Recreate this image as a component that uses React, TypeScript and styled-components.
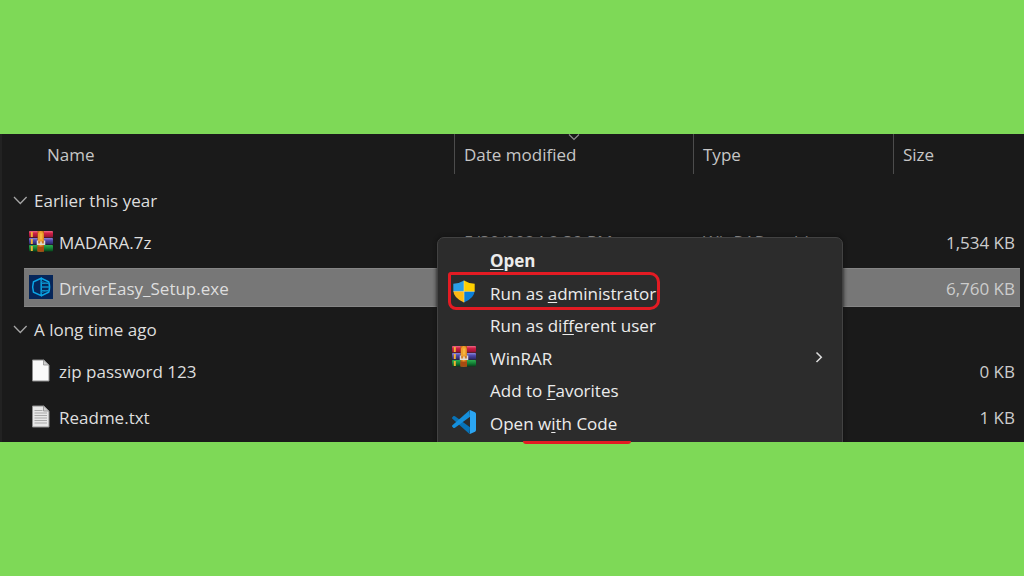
import React from "react";
import styled, { createGlobalStyle } from "styled-components";

const GlobalStyle = createGlobalStyle`
  * { box-sizing: border-box; }
  body {
    margin: 0;
    background: #7ed957;
    font-family: "Open Sans", "Noto Sans", sans-serif;
    font-size: 17px;
    line-height: 24px;
  }
  button {
    font: inherit;
    color: inherit;
    background: none;
    border: 0;
    padding: 0;
    text-align: left;
  }
`;

const Page = styled.main`
  min-height: 100vh;
  display: flex;
  flex-direction: column;
  justify-content: center;
`;

const Stage = styled.div`
  position: relative;
`;

const Explorer = styled.section`
  position: relative;
  overflow: hidden;
  padding-bottom: 2px;
  background: #1a1a1a;
  box-shadow: inset 2px 0 #222222;
`;

const FileTable = styled.table`
  width: 100%;
  table-layout: fixed;
  border-collapse: separate;
  border-spacing: 0;
  color: #dedede;
`;

const Column = styled.col<{ $width?: number }>`
  width: ${(p) => (p.$width ? `${p.$width}px` : "auto")};
`;

const HeadCell = styled.th<{ $first?: boolean }>`
  position: relative;
  height: 40px;
  padding: 2px 0 0 ${(p) => (p.$first ? "47px" : "9px")};
  border-left: ${(p) => (p.$first ? "0" : "1px solid #4c4c4c")};
  color: #c6c6c6;
  font-weight: 400;
  text-align: left;
`;

const SortMark = styled.svg`
  position: absolute;
  top: 0;
  left: 50%;
  width: 12px;
  height: 7px;
  margin-left: -6px;
`;

const Group = styled.tbody`
  &:first-of-type::before {
    content: "";
    display: table-row;
    height: 8px;
  }
`;

const GroupCell = styled.th`
  height: 37px;
  padding: 0 0 0 13px;
  font-weight: 400;
  text-align: left;
`;

const GroupToggle = styled.button`
  display: flex;
  align-items: center;
  gap: 6px;
`;

const Cell = styled.td<{ $selected?: boolean }>`
  height: 46px;
  padding: 0 5px 0 10px;
  border: 0 solid transparent;
  border-width: 3px 0 4px;
  background: ${(p) => (p.$selected ? "#777777" : "none")} padding-box;
  box-shadow: ${(p) => (p.$selected ? "inset 0 1px #868686, inset 0 -1px #868686" : "none")};
  color: #cccccc;
  white-space: nowrap;
`;

const NameCell = styled(Cell)`
  padding: 2px 0 0 5px;
  border-left-width: 24px;
  color: #dedede;
`;

const SizeCell = styled(Cell)`
  padding-top: 2px;
  border-right-width: 4px;
  text-align: right;
`;

const FileLabel = styled.span`
  display: flex;
  align-items: center;
  gap: 6px;
  svg { margin-bottom: 3px; }
`;

const Menu = styled.menu`
  position: absolute;
  top: 103px;
  left: 437px;
  width: 406px;
  height: 230px;
  margin: 0;
  padding: 7px 0;
  border: 1px solid #424242;
  border-radius: 7px;
  background: #2c2c2c;
  box-shadow: 0 0 4px #101010;
  color: #ececec;
  list-style: none;
`;

const MenuItems = styled.div`
  display: flex;
  flex-direction: column;
  height: 195px;
`;

const MenuEntry = styled.li`
  flex: 1;
  display: flex;
`;

const MenuButton = styled.button<{ $bold?: boolean }>`
  flex: 1;
  display: grid;
  grid-template-columns: 24px 1fr 10px;
  column-gap: 14px;
  align-items: center;
  padding: 0 18px 0 14px;
  font-weight: ${(p) => (p.$bold ? 700 : 400)};
  svg { display: block; margin-bottom: 4px; }
  u { text-decoration-thickness: 1px; text-underline-offset: 2px; }
`;

const RedOutline = styled.div`
  position: absolute;
  top: 138px;
  left: 448px;
  width: 212px;
  height: 38px;
  border: 3px solid #e31b23;
  border-radius: 3px 10px 10px 8px;
`;

const RedStroke = styled.div`
  position: absolute;
  bottom: -2px;
  left: 523px;
  width: 108px;
  height: 3px;
  border-radius: 0 0 6px 6px;
  background: #e31b23;
`;

const Chevron = () => (
  <svg width="15" height="24" viewBox="0 0 15 24" fill="none" stroke="#a6a6a6" strokeWidth="1.3">
    <path d="M1 8l6.300 6.500L13.600 8" />
  </svg>
);

const Submenu = () => (
  <svg width="10" height="14" viewBox="0 0 10 14" fill="none" stroke="#dddddd" strokeWidth="1.500">
    <path d="M2.500 2.500l4.800 4.700L2.500 12" />
  </svg>
);

const Archive = () => (
  <svg width="24" height="21" viewBox="0 0 24 21">
    <defs>
      <linearGradient id="book-red" x2="0" y2="1">
        <stop stopColor="#ef6b86" /><stop offset=".35" stopColor="#d01f46" /><stop offset="1" stopColor="#8c1233" />
      </linearGradient>
      <linearGradient id="book-blue" x2="0" y2="1">
        <stop stopColor="#8c86dc" /><stop offset=".4" stopColor="#4d48a8" /><stop offset="1" stopColor="#282463" />
      </linearGradient>
      <linearGradient id="book-green" x2="0" y2="1">
        <stop stopColor="#2fae50" /><stop offset=".5" stopColor="#148236" /><stop offset="1" stopColor="#07401a" />
      </linearGradient>
      <linearGradient id="strap">
        <stop stopColor="#b85c10" /><stop offset=".5" stopColor="#f0a030" /><stop offset="1" stopColor="#b45a12" />
      </linearGradient>
    </defs>
    <rect width="24" height="6.500" rx="1" fill="url(#book-red)" />
    <rect y="7" width="24" height="6.500" rx="1" fill="url(#book-blue)" />
    <rect y="14" width="24" height="6.500" rx="1" fill="url(#book-green)" />
    <path d="M2.800 1v5M2.800 8v5M2.800 15v5" stroke="#f2b234" strokeWidth="2" />
    <rect x="8.500" width="6.500" height="20.500" fill="url(#strap)" />
    <path d="M9 10V3.500Q9 .8 11.800.8t2.800 2.700V10z" fill="#eda02c" />
    <path d="M8.500 15.500h6.500v5H8.500z" fill="#a84a12" />
    <path d="M8.500 9.500v3.800h7V9.500M12 10.500v2.800" fill="none" stroke="#dedbd6" strokeWidth="1.500" />
    <path d="M12 2.500v6" stroke="#ffc957" />
  </svg>
);

const DriverEasy = () => (
  <svg width="24" height="24" viewBox="0 0 24 24">
    <path fill="#06265a" d="M0 0h24v24H0z" />
    <g fill="none" stroke="#0aa5e6" strokeWidth="1.500">
      <path d="M12.200 3.300L4.500 6.800Q2.800 12 4.500 17.200l7.700 3.500z" />
      <path d="M12.200 3.300l7.500 3.500Q21.500 12 19.700 17.200l-7.500 3.500" />
      <path d="M12.500 8.200h7M12.500 12h8M12.500 15.800h7" stroke="#0b8dc8" />
      <path d="M12.200 6l5 2.200M12.200 18l5-2.200" stroke="#086ca2" strokeWidth="1" />
    </g>
  </svg>
);

const Document = ({ lined }: { lined?: boolean }) => (
  <svg width="24" height="23" viewBox="0 0 24 23">
    <path d="M3.500 1h11.300L20 6v16H3.500z" fill={lined ? "#e7e7e7" : "#fafafa"} stroke="#8d8d8d" />
    <path d="M14.500 1v5H20z" fill="#d0d0d0" stroke="#8d8d8d" strokeWidth=".8" />
    {lined && <path d="M5.500 5.500h8M5.500 8h12.500M5.500 10.500h12.500M5.500 13h12.500M5.500 15.500h12.500M5.500 18h12.500" stroke="#a9a9a9" />}
  </svg>
);

const Shield = () => (
  <svg width="24" height="23" viewBox="0 0 24 23">
    <defs>
      <clipPath id="shield-shape">
        <path d="M12 .5q4.500 3 10.700 3.300v7Q22.500 18 12 22.500 1.500 18 1.300 10.800v-7Q7.500 3.500 12 .5z" />
      </clipPath>
    </defs>
    <g clipPath="url(#shield-shape)">
      <path fill="#2c9fe6" d="M0 0h12v11.500H0z" />
      <path fill="#ffd000" d="M12 0h12v11.500H12z" />
      <path fill="#fdb913" d="M0 11.500h12V23H0z" />
      <path fill="#0b7fd8" d="M12 11.500h12V23H12z" />
      <path d="M12 0v23M0 11.500h24" stroke="#fbe38c" strokeWidth=".6" />
    </g>
  </svg>
);

const Code = () => (
  <svg width="24" height="24" viewBox="0 0 24 24">
    <path fill="#0873b8" d="M1.200 6.300L.2 7.500q-.4.700.2 1.300L17.500 24 18 17.300 3 6.300q-1-.7-1.800 0z" />
    <path fill="#158fdc" d="M1.200 17.700l-1-1.200q-.4-.7.2-1.300L17.500.2 18 6.700 3 17.700q-1 .7-1.800 0z" />
    <path fill="#2ba5f2" d="M17.300 23.700q.4.400 1.200.1l4.500-2.100q1-.5 1-1.700V4q0-1.200-1-1.700L18.500.2q-.8-.3-1.300.3.800-.3.800 1v21q0 1.500-.7 1.200z" />
  </svg>
);

interface FileEntry {
  name: string;
  icon: React.ReactNode;
  date?: string;
  type?: string;
  size: string;
  selected?: boolean;
}

const groups: { title: string; files: FileEntry[] }[] = [
  {
    title: "Earlier this year",
    files: [
      { name: "MADARA.7z", icon: <Archive />, date: "5/30/2024 2:39 PM", type: "WinRAR archive", size: "1,534 KB" },
      { name: "DriverEasy_Setup.exe", icon: <DriverEasy />, size: "6,760 KB", selected: true },
    ],
  },
  {
    title: "A long time ago",
    files: [
      { name: "zip password 123", icon: <Document />, size: "0 KB" },
      { name: "Readme.txt", icon: <Document lined />, size: "1 KB" },
    ],
  },
];

const menuItems: { id: string; label: React.ReactNode; icon?: React.ReactNode; bold?: boolean; more?: boolean }[] = [
  { id: "open", label: <><u>O</u>pen</>, bold: true },
  { id: "admin", label: <>Run as <u>a</u>dministrator</>, icon: <Shield /> },
  { id: "user", label: <>Run as di<u>f</u>ferent user</> },
  { id: "winrar", label: "WinRAR", icon: <Archive />, more: true },
  { id: "favorites", label: <>Add to <u>F</u>avorites</> },
  { id: "code", label: <>Open w<u>i</u>th Code</>, icon: <Code /> },
];

export default function App() {
  return (
    <Page>
      <GlobalStyle />
      <Stage>
        <Explorer>
          <FileTable>
            <colgroup>
              <Column />
              <Column $width={239} />
              <Column $width={200} />
              <Column $width={131} />
            </colgroup>
            <thead>
              <tr>
                <HeadCell $first scope="col">Name</HeadCell>
                <HeadCell scope="col">
                  Date modified
                  <SortMark viewBox="0 0 12 7" fill="none" stroke="#8f8f8f" strokeWidth="1.200">
                    <path d="M1 .5l5 5 5-5" />
                  </SortMark>
                </HeadCell>
                <HeadCell scope="col">Type</HeadCell>
                <HeadCell scope="col">Size</HeadCell>
              </tr>
            </thead>
            {groups.map((group) => (
              <Group key={group.title}>
                <tr>
                  <GroupCell colSpan={4} scope="rowgroup">
                    <GroupToggle type="button" aria-expanded="true">
                      <Chevron />
                      {group.title}
                    </GroupToggle>
                  </GroupCell>
                </tr>
                {group.files.map((file) => (
                  <tr key={file.name}>
                    <NameCell $selected={file.selected}>
                      <FileLabel>
                        {file.icon}
                        {file.name}
                      </FileLabel>
                    </NameCell>
                    <Cell $selected={file.selected}>{file.date}</Cell>
                    <Cell $selected={file.selected}>{file.type}</Cell>
                    <SizeCell $selected={file.selected}>{file.size}</SizeCell>
                  </tr>
                ))}
              </Group>
            ))}
          </FileTable>
          <Menu>
            <MenuItems>
              {menuItems.map((item) => (
                <MenuEntry key={item.id}>
                  <MenuButton type="button" $bold={item.bold}>
                    <span>{item.icon}</span>
                    <span>{item.label}</span>
                    {item.more && <Submenu />}
                  </MenuButton>
                </MenuEntry>
              ))}
            </MenuItems>
          </Menu>
          <RedOutline />
        </Explorer>
        <RedStroke />
      </Stage>
    </Page>
  );
}
